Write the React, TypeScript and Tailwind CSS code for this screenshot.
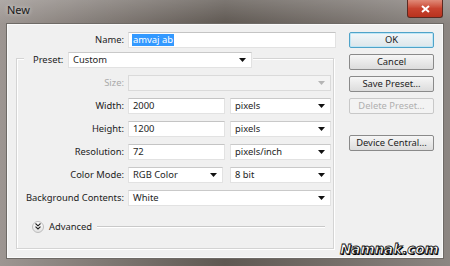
import React from 'react'

const font = { fontFamily: '"Noto Sans", "Open Sans", sans-serif' }

function Arrow({ disabled }: { disabled?: boolean }) {
  return (
    <svg width="7" height="4" viewBox="0 0 7 4" className="shrink-0">
      <path d="M0 0H7L3.5 4Z" fill={disabled ? '#b5b5b5' : '#111'} />
    </svg>
  )
}

function Select({ value, w, disabled, className = '' }: { value: string; w: string; disabled?: boolean; className?: string }) {
  return (
    <div
      className={`${w} ${className} h-[16px] flex items-center justify-between pl-[4px] pr-[5px] border ${
        disabled ? 'bg-[#f3f3f3] border-[#dadada]' : 'bg-white border-[#e2e2e2] border-t-[#c9c9c9]'
      }`}
    >
      <span className="leading-none text-[#1e1e1e]">{value}</span>
      <Arrow disabled={disabled} />
    </div>
  )
}

function Input({ value, w }: { value: string; w: string }) {
  return (
    <div className={`${w} h-[16px] flex items-center pl-[4px] bg-white border border-[#e2e2e2] border-t-[#c4c4c4]`}>
      <span className="leading-none text-[#1e1e1e]">{value}</span>
    </div>
  )
}

function Row({ label, children, disabled }: { label: string; children: React.ReactNode; disabled?: boolean }) {
  return (
    <div className="flex items-center h-[16px]">
      <div
        className={`w-[111px] shrink-0 flex justify-end pr-[4px] whitespace-nowrap leading-none ${
          disabled ? 'text-[#a9a9a9]' : 'text-[#222]'
        }`}
      >
        {label}
      </div>
      <div className="flex gap-[5px]">{children}</div>
    </div>
  )
}

function Button({ label, primary, disabled }: { label: string; primary?: boolean; disabled?: boolean }) {
  return (
    <div
      className={`h-[16px] w-[85px] flex items-center justify-center rounded-[2px] border leading-none ${
        primary
          ? 'border-[#4fa3c9] bg-gradient-to-b from-[#f2f7fa] to-[#dde6ea] text-[#222] shadow-[inset_0_0_0_1px_#bfe6f5]'
          : disabled
          ? 'border-[#c8c8c8] bg-[#f3f3f3] text-[#b0b0b0]'
          : 'border-[#8a8a8a] bg-gradient-to-b from-[#f6f6f6] to-[#dcdcdc] text-[#222]'
      }`}
    >
      {label}
    </div>
  )
}

export default function App() {
  return (
    <div
      className="relative w-[450px] h-[266px] overflow-hidden text-[9.4px] flex flex-col bg-gradient-to-r from-[#9d9692] via-[#5f5852] to-[#8c8682]"
      style={font}
    >
      {/* title bar */}
      <div className="h-[24px] flex items-start pl-[7px] pt-[4px] bg-gradient-to-b from-[#ffffff30] to-transparent">
        <span className="text-[11px] text-[#1a1a1a] leading-none [text-shadow:0_0_4px_#ffffffb0]">New</span>
      </div>
      <div className="absolute right-[7px] top-0 w-[36px] h-[18px] rounded-b-[3px] border border-t-0 border-[#5a2a22] bg-gradient-to-b from-[#e08a78] via-[#c8432f] to-[#b8321e] flex items-center justify-center">
        <svg width="9" height="8" viewBox="0 0 9 8">
          <path d="M1 1L8 7M8 1L1 7" stroke="#fff" strokeWidth="2" />
        </svg>
      </div>

      {/* client area */}
      <div className="mx-[7px] mb-[8px] flex-1 bg-[#f0f0f0] border border-[#fafafa] shadow-[0_0_0_1px_#6e6a66] flex">
        <div className="pl-[8px] pt-[7px] w-[329px] flex flex-col">
          <div className="flex items-center h-[16px]">
            <div className="w-[112px] text-right pr-[4px] leading-none text-[#222]">Name:</div>
            <div className="w-[208px] h-[16px] flex items-center pl-[3px] bg-white border border-[#e2e2e2] border-t-[#c4c4c4]">
              <span className="bg-[#3399ff] text-white leading-[12px] px-[1px]">amvaj ab</span>
            </div>
          </div>

          {/* group box */}
          <div className="mt-[10px] w-[318px] h-[191px] border border-[#d4d4d4] shadow-[inset_1px_1px_0_#fff,1px_1px_0_#fff] flex flex-col">
            <div className="-mt-[7px] ml-[7px] w-[229px] bg-[#f0f0f0] flex items-center h-[16px] pl-[9px]">
              <span className="leading-none text-[#222] w-[35px]">Preset:</span>
              <Select value="Custom" w="w-[184px]" />
            </div>
            <div className="mt-[7px] flex flex-col gap-[7px]">
              <Row label="Size:" disabled>
                <Select value="" w="w-[203px]" disabled />
              </Row>
              <Row label="Width:">
                <Input value="2000" w="w-[97px]" />
                <Select value="pixels" w="w-[101px]" />
              </Row>
              <Row label="Height:">
                <Input value="1200" w="w-[97px]" />
                <Select value="pixels" w="w-[101px]" />
              </Row>
              <Row label="Resolution:">
                <Input value="72" w="w-[97px]" />
                <Select value="pixels/inch" w="w-[101px]" />
              </Row>
              <Row label="Color Mode:">
                <Select value="RGB Color" w="w-[95px]" />
                <Select value="8 bit" w="w-[101px]" className="ml-[2px]" />
              </Row>
              <Row label="Background Contents:">
                <Select value="White" w="w-[203px]" />
              </Row>
            </div>
            <div className="mt-[14px] flex items-center h-[13px] pl-[15px] pr-[8px]">
              <div className="w-[12px] h-[12px] rounded-full border border-[#bdbdbd] bg-gradient-to-b from-white to-[#e2e2e2] flex items-center justify-center">
                <svg width="6" height="7" viewBox="0 0 6 7">
                  <path d="M0.5 0.5L3 2.8L5.5 0.5M0.5 3.7L3 6L5.5 3.7" stroke="#222" strokeWidth="1.1" fill="none" />
                </svg>
              </div>
              <span className="ml-[5px] leading-none text-[#222]">Advanced</span>
              <div className="ml-[5px] flex-1 h-[2px] border-t border-[#c9c9c9] border-b border-b-white" />
            </div>
          </div>
        </div>

        {/* buttons */}
        <div className="ml-[12px] pt-[7px] flex flex-col gap-[6px]">
          <Button label="OK" primary />
          <Button label="Cancel" />
          <Button label="Save Preset..." />
          <Button label="Delete Preset..." disabled />
          <div className="mt-[15px]">
            <Button label="Device Central..." />
          </div>
        </div>
      </div>

      {/* watermark */}
      <div
        className="absolute left-[340px] top-[243px] text-[13.5px] font-bold italic leading-none text-white [-webkit-text-stroke:0.8px_#111] [text-shadow:1px_1px_0_#000]"
        style={{ fontFamily: '"DejaVu Sans", sans-serif' }}
      >
        Namnak.com
      </div>
    </div>
  )
}
